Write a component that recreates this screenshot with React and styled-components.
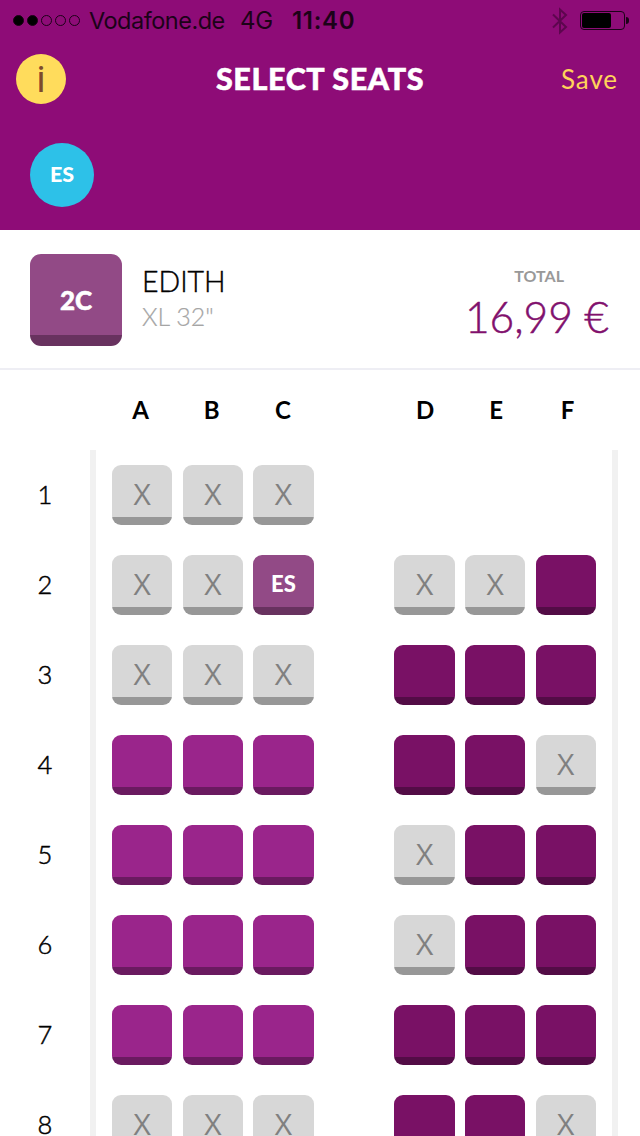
import styled, { createGlobalStyle } from "styled-components";

const COLUMNS = ["A", "B", "C", "", "D", "E", "F"];

// x = taken, s = selected, l = large seat, p = premium seat, - = no seat
const ROWS = ["xxx----", "xxs-xxp", "xxx-ppp", "lll-ppx", "lll-xpp", "lll-xpp", "lll-ppp", "xxx-ppx"];

const SEATS = {
    x: { face: "#d7d7d7", edge: "#979797", label: "X" },
    s: { face: "#924a86", edge: "#68325f", label: "ES" },
    l: { face: "#9a258b", edge: "#6a1a60" },
    p: { face: "#791165", edge: "#530c46" },
};

const StatusBar = () => {
    return (
        <Status>
            <Signal>
                <Dot $filled />
                <Dot $filled />
                <Dot />
                <Dot />
                <Dot />
            </Signal>
            <Carrier>Vodafone.de</Carrier>
            <Network>4G</Network>
            <Clock>11:40</Clock>
            <BluetoothIcon viewBox="0 0 16 28">
                <path d="M1 7.5 14 20 8 25.5V2.5L14 8 1 20.5" />
            </BluetoothIcon>
            <Battery>
                <BatteryLevel />
            </Battery>
            <BatteryTip />
        </Status>
    );
};

const SeatRow = ({ number, seats }) => {
    return (
        <Row>
            <RowNumber>{number}</RowNumber>
            <Cabin>
                {seats.split("").map((kind, i) => {
                    const seat = SEATS[kind];
                    if (!seat) return <span key={i} />;
                    return (
                        <Seat key={i} $face={seat.face} $edge={seat.edge} $selected={kind === "s"}>
                            {seat.label}
                        </Seat>
                    );
                })}
            </Cabin>
        </Row>
    );
};

export default function App() {
    return (
        <Screen>
            <GlobalStyle />
            <Header>
                <StatusBar />
                <NavBar>
                    <InfoButton>i</InfoButton>
                    <Title>SELECT SEATS</Title>
                    <SaveButton>Save</SaveButton>
                </NavBar>
                <Passengers>
                    <Avatar>ES</Avatar>
                </Passengers>
            </Header>
            <Summary>
                <SelectedSeat>2C</SelectedSeat>
                <Passenger>
                    <Name>EDITH</Name>
                    <SeatType>XL 32"</SeatType>
                </Passenger>
                <Total>
                    <TotalLabel>TOTAL</TotalLabel>
                    <Price>16,99 €</Price>
                </Total>
            </Summary>
            <ColumnNames>
                {COLUMNS.map((name, i) => (
                    <span key={i}>{name}</span>
                ))}
            </ColumnNames>
            <SeatMap>
                {ROWS.map((seats, i) => (
                    <SeatRow key={i} number={i + 1} seats={seats} />
                ))}
            </SeatMap>
        </Screen>
    );
}

const GlobalStyle = createGlobalStyle`
    * {
        box-sizing: border-box;
    }
    body {
        margin: 0;
        background: #ffffff;
    }
    button {
        padding: 0;
        border: none;
        background: none;
    }
`;

const Screen = styled.main`
    width: 640px;
    height: 1136px;
    overflow: hidden;
    display: flex;
    flex-direction: column;
    background: #ffffff;
    color: #000000;
    font-family: Lato, "Open Sans", sans-serif;
`;
const Header = styled.header`
    height: 230px;
    flex-shrink: 0;
    background: #8e0c77;
`;
const Status = styled.div`
    height: 40px;
    padding: 1px 11px 0 13px;
    display: flex;
    align-items: center;
    color: #1c0218;
    font-family: Inter, sans-serif;
    font-size: 24px;
    line-height: 40px;
    white-space: nowrap;
`;
const Signal = styled.div`
    width: 76px;
    display: flex;
    gap: 3px;
`;
const Dot = styled.span`
    width: 11px;
    height: 11px;
    border: 1px solid #1c0218;
    border-radius: 50%;
    background: ${({ $filled }) => ($filled ? "#000000" : "transparent")};
`;
const Carrier = styled.span`
    width: 151px;
    font-size: 23.5px;
    letter-spacing: -0.5px;
`;
const Network = styled.span`
    width: 52px;
    letter-spacing: -0.3px;
`;
const Clock = styled.span`
    font-weight: 600;
    letter-spacing: 0.7px;
`;
const BluetoothIcon = styled.svg`
    width: 16px;
    height: 28px;
    margin-left: auto;
    margin-right: 12px;
    fill: none;
    stroke: #5d064e;
    stroke-width: 2;
`;
const Battery = styled.div`
    width: 45px;
    height: 19px;
    padding: 1px;
    border: 1px solid #1c0218;
    border-radius: 4px;
`;
const BatteryLevel = styled.div`
    width: 29px;
    height: 15px;
    border-radius: 2px;
    background: #000000;
`;
const BatteryTip = styled.div`
    width: 3px;
    height: 7px;
    margin-left: 1px;
    border-radius: 0 3px 3px 0;
    background: #1c0218;
`;
const NavBar = styled.nav`
    height: 78px;
    padding: 0 22px 0 16px;
    display: grid;
    grid-template-columns: 100px 1fr 94px;
    align-items: center;
`;
const InfoButton = styled.button`
    width: 50px;
    height: 50px;
    border-radius: 50%;
    background: #ffdc5c;
    color: #7d4a2c;
    font-family: Roboto, sans-serif;
    font-size: 37px;
    line-height: 52px;
`;
const Title = styled.h1`
    margin: 0;
    padding-bottom: 3px;
    color: #ffffff;
    font-size: 30.5px;
    font-weight: 900;
    letter-spacing: 0.6px;
    text-align: center;
    -webkit-text-stroke: 0.5px #ffffff;
`;
const SaveButton = styled.button`
    color: #ffd35a;
    font-family: Lato, sans-serif;
    font-size: 26px;
    letter-spacing: 0.9px;
    text-align: right;
`;
const Passengers = styled.div`
    padding: 25px 30px;
`;
const Avatar = styled.div`
    width: 64px;
    height: 64px;
    border-radius: 50%;
    background: #2dc1e8;
    color: #ffffff;
    font-size: 21.5px;
    font-weight: 900;
    line-height: 63px;
    text-align: center;
`;
const Summary = styled.section`
    height: 140px;
    flex-shrink: 0;
    padding: 24px 31px 0 30px;
    display: flex;
    border-bottom: 2px solid #eeeef4;
`;
const SelectedSeat = styled.div`
    width: 92px;
    height: 92px;
    border-radius: 11px;
    background: linear-gradient(#924a86 81px, #68325f 81px);
    color: #ffffff;
    font-size: 26px;
    font-weight: 900;
    line-height: 92px;
    text-align: center;
    -webkit-text-stroke: 0.5px #ffffff;
`;
const Passenger = styled.div`
    flex: 1;
    padding: 9px 0 0 20px;
`;
const Name = styled.div`
    font-size: 28.5px;
    font-weight: 300;
    line-height: 36px;
    -webkit-text-stroke: 0.4px #000000;
`;
const SeatType = styled.div`
    color: #a5a5a5;
    font-size: 25px;
    font-weight: 300;
    line-height: 34px;
    -webkit-text-stroke: 0.2px #a5a5a5;
`;
const Total = styled.div`
    padding-top: 12px;
    text-align: right;
`;
const TotalLabel = styled.div`
    padding-right: 45px;
    color: #999999;
    font-size: 16px;
    font-weight: 700;
    line-height: 20px;
`;
const Price = styled.div`
    color: #81106d;
    font-size: 42.5px;
    font-weight: 300;
    line-height: 62px;
    -webkit-text-stroke: 0.5px #81106d;
`;
const ColumnNames = styled.div`
    height: 80px;
    flex-shrink: 0;
    padding: 0 37px 0 105px;
    display: grid;
    grid-template-columns: repeat(7, 1fr);
    font-size: 24px;
    font-weight: 700;
    line-height: 80px;
    text-align: center;
`;
const SeatMap = styled.section`
    display: flex;
    flex-direction: column;
`;
const Row = styled.div`
    height: 90px;
    display: flex;
`;
const RowNumber = styled.div`
    width: 90px;
    font-size: 25.5px;
    font-weight: 300;
    line-height: 89px;
    text-align: center;
    -webkit-text-stroke: 0.5px #000000;
`;
const Cabin = styled.div`
    width: 528px;
    padding: 15px 16px;
    display: grid;
    grid-template-columns: repeat(7, 1fr);
    column-gap: 10.2px;
    border: solid #f1f1f1;
    border-width: 0 6px;
`;
const Seat = styled.div`
    height: 60px;
    border-radius: 9px;
    background: linear-gradient(${({ $face, $edge }) => `${$face} 52px, ${$edge} 52px`});
    color: ${({ $selected }) => ($selected ? "#ffffff" : "#808080")};
    font-family: ${({ $selected }) => ($selected ? "Lato" : "Open Sans")}, sans-serif;
    font-size: ${({ $selected }) => ($selected ? "22px" : "30px")};
    font-weight: ${({ $selected }) => ($selected ? 900 : 400)};
    line-height: 58px;
    text-align: center;
`;
